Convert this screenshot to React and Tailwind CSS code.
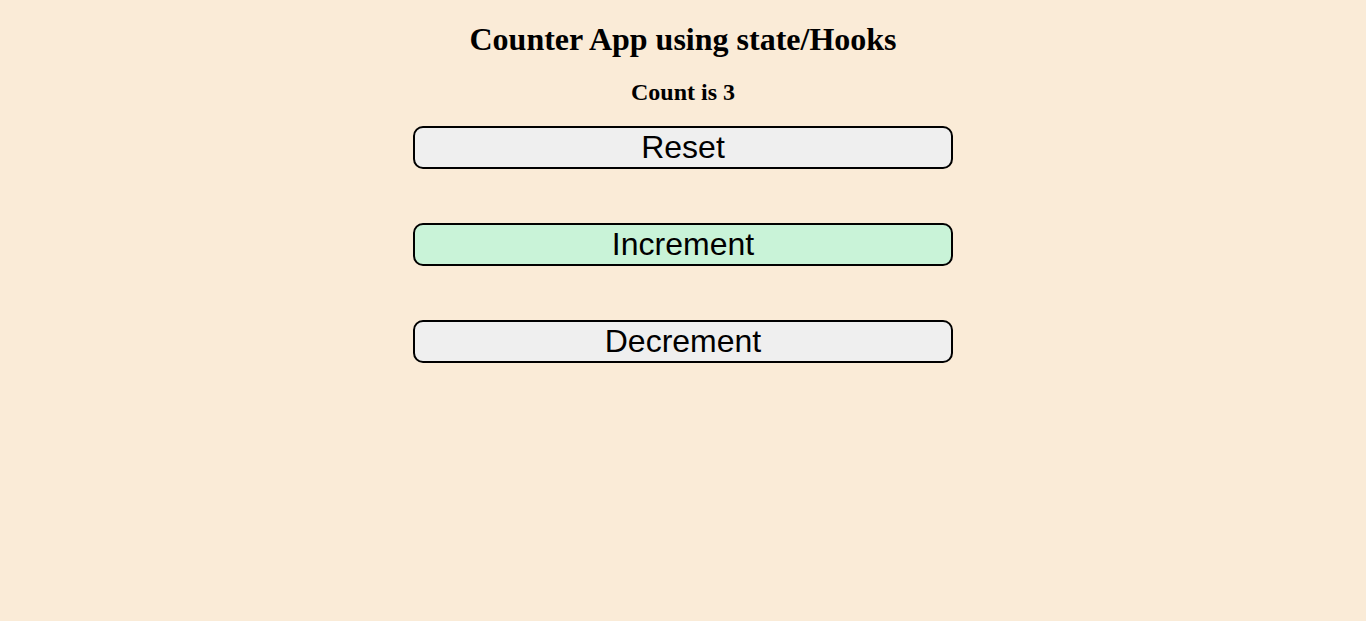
import { useState } from "react";

const buttonClass =
  "h-[43px] w-full cursor-pointer rounded-[10px] border-2 border-black bg-[#efefef] text-center font-['Liberation_Sans',Arial,sans-serif] text-[32px] leading-[37px] text-black hover:bg-[#c9f3d8]";

export default function App() {
  const [count, setCount] = useState(3);

  return (
    <main className="flex min-h-screen flex-col items-center bg-[#faebd7] px-4 pt-[21px] font-['Liberation_Serif','Times_New_Roman',serif] text-black">
      <h1 className="text-[32px] leading-[37px] font-bold">Counter App using state/Hooks</h1>
      <h2 className="mt-5 text-[24px] leading-[28px] font-bold">Count is {count}</h2>
      <div className="mt-5 flex w-full max-w-[540px] flex-col gap-[54px]">
        <button type="button" className={buttonClass} onClick={() => setCount(0)}>
          Reset
        </button>
        <button
          type="button"
          className="h-[43px] w-full cursor-pointer rounded-[10px] border-2 border-black bg-[#c9f3d8] text-center font-['Liberation_Sans',Arial,sans-serif] text-[32px] leading-[37px] text-black"
          onClick={() => setCount(count + 1)}
        >
          Increment
        </button>
        <button type="button" className={buttonClass} onClick={() => setCount(count - 1)}>
          Decrement
        </button>
      </div>
    </main>
  );
}
